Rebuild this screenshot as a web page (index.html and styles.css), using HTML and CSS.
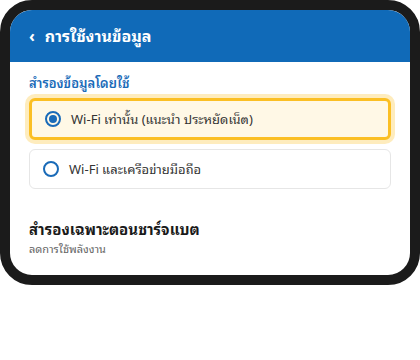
FILE: index.html
```html
<!DOCTYPE html>
<html lang="th">
<head>
    <meta charset="UTF-8">
    <meta name="viewport" content="width=device-width, initial-scale=1.0">
    <title>การใช้งานข้อมูล</title>
    <link rel="stylesheet" href="styles.css">
</head>
<body>

    <div class="phone">
        <div class="header">
            <span class="back">&lsaquo;</span>
            <h1>การใช้งานข้อมูล</h1>
        </div>

        <div class="content">
            <div class="section-label">สำรองข้อมูลโดยใช้</div>

            <label class="option selected">
                <span class="radio"></span>
                <span>Wi-Fi เท่านั้น (แนะนำ ประหยัดเน็ต)</span>
            </label>

            <label class="option">
                <span class="radio"></span>
                <span>Wi-Fi และเครือข่ายมือถือ</span>
            </label>

            <div class="setting">
                <div class="setting-title">สำรองเฉพาะตอนชาร์จแบต</div>
                <div class="setting-sub">ลดการใช้พลังงาน</div>
            </div>
        </div>
    </div>

</body>
</html>
```

FILE: styles.css
```css
body {
    font-family: "Noto Sans", "Noto Sans Thai Looped", "Loma", "Garuda", "Tahoma", sans-serif;
    background: #fff;
    margin: 0;
}
.phone {
    width: 420px;
    height: 285px;
    box-sizing: border-box;
    border: 10px solid #1b1b1b;
    border-radius: 32px;
    background: #fff;
    overflow: hidden;
}
.header {
    background: #106ab8;
    color: #fff;
    height: 52px;
    display: flex;
    align-items: center;
    padding: 0 19px;
    gap: 10px;
}
.back {
    font-size: 16px;
    font-weight: bold;
    line-height: 20px;
}
h1 {
    margin: 0;
    font-size: 16px;
    font-weight: bold;
    line-height: 20px;
}
.content {
    padding: 12px 19px 0;
}
.section-label {
    color: #1a6bb8;
    font-size: 13px;
    font-weight: 600;
    line-height: 18px;
    margin-bottom: 6px;
}
.option {
    display: flex;
    align-items: center;
    gap: 10px;
    height: 40px;
    box-sizing: border-box;
    padding: 0 13px;
    border: 1px solid #e6e6e6;
    border-radius: 6px;
    font-size: 13px;
    line-height: 18px;
    color: #333;
    margin-bottom: 10px;
}
.option.selected {
    border: 3px solid #fbbf24;
    background: #fff8e6;
    box-shadow: 0 0 0 4px rgba(251, 191, 36, 0.3);
    height: 42px;
    margin-bottom: 9px;
}
.radio {
    width: 12px;
    height: 12px;
    border: 2.5px solid #1a6bb8;
    border-radius: 50%;
    box-sizing: content-box;
    display: flex;
    align-items: center;
    justify-content: center;
}
.selected .radio::after {
    content: "";
    width: 8px;
    height: 8px;
    border-radius: 50%;
    background: #1a6bb8;
}
.setting {
    margin-top: 30px;
}
.setting-title {
    font-size: 15px;
    font-weight: bold;
    line-height: 20px;
    color: #1a1a1a;
}
.setting-sub {
    font-size: 11px;
    line-height: 15px;
    color: #666;
    margin-top: 2px;
}
```
